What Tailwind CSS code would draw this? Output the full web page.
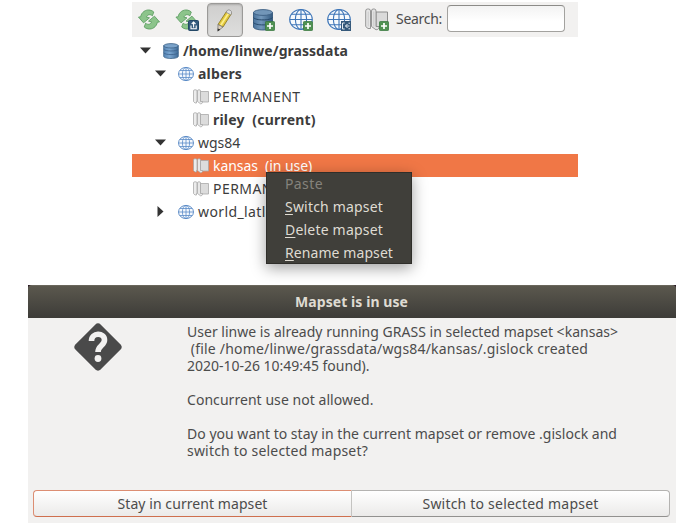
<!DOCTYPE html>
<html lang="en">
<head>
<meta charset="utf-8">
<title>Mapset is in use</title>
<script src="https://cdn.jsdelivr.net/npm/@tailwindcss/browser@4"></script>
</head>
<body class="bg-white w-[698px] h-[528px] overflow-hidden font-['Noto_Sans',sans-serif] text-[14px] text-[#3c3c3c]">
<svg class="absolute w-0 h-0">
  <defs>
    <linearGradient id="gdb" x1="0" x2="1"><stop offset="0" stop-color="#5585b5"/><stop offset=".4" stop-color="#7ba6d0"/><stop offset="1" stop-color="#3f6a96"/></linearGradient>
    <linearGradient id="gdt" x1="0" x2="1"><stop offset="0" stop-color="#4a749d"/><stop offset=".4" stop-color="#7398bb"/><stop offset="1" stop-color="#335a80"/></linearGradient>
    <symbol id="refresh" viewBox="0 0 24 24">
      <g fill="#8cc48b" stroke="#5a9c60" stroke-width=".9" stroke-linejoin="round">
        <path d="M1 9.500l2.300-.3C4 4.500 8.500 1.300 13 2.200c1.700.3 3 1 4 2l-1.500 4C13.500 6.300 10.500 6.500 9.300 9.500l3.200.8L6.300 15.500z"/>
        <path d="M23 14.500l-2.300.3C20 19.500 15.500 22.700 11 21.800c-1.700-.3-3-1-4-2l1.500-4c2 1.900 5 1.700 6.200-1.300l-3.200-.8L17.700 8.500z"/>
      </g>
    </symbol>
    <symbol id="db" viewBox="0 0 16 16">
      <path d="M.7 2.700v10.600C.7 14.600 4 15.500 8 15.500s7.300-.9 7.300-2.200V2.700z" fill="url(#gdb)" stroke="#3d6389" stroke-width=".8"/>
      <path d="M.7 6.200C1.500 7.400 4.500 8 8 8s6.500-.6 7.300-1.800M.7 9.800c.8 1.200 3.800 1.800 7.300 1.800s6.500-.6 7.300-1.800" fill="none" stroke="#3c618a" stroke-width=".8"/>
      <ellipse cx="8" cy="2.800" rx="7.300" ry="2.200" fill="#7ba3ca" stroke="#3d6389" stroke-width=".8"/>
    </symbol>
    <symbol id="dbl" viewBox="0 0 24 24">
      <path d="M1.500 4.500v14.500c0 1.700 4.300 3 9.500 3s9.500-1.300 9.500-3V4.500z" fill="url(#gdt)" stroke="#36587a" stroke-width=".9"/>
      <path d="M1.500 9.500c1 1.600 5 2.400 9.500 2.400s8.500-.8 9.500-2.400M1.500 14.500c1 1.600 5 2.400 9.500 2.400s8.500-.8 9.500-2.400" fill="none" stroke="#284a6b" stroke-width="1"/>
      <ellipse cx="11" cy="4.500" rx="9.500" ry="2.900" fill="#7296b8" stroke="#3c5f82" stroke-width=".9"/>
    </symbol>
    <symbol id="globe" viewBox="0 0 16 16">
      <ellipse cx="8" cy="8" rx="7.500" ry="6.600" fill="#f4f8fd"/>
      <g fill="none" stroke="#5a8cc8" stroke-width=".8"><ellipse cx="8" cy="8" rx="7.500" ry="6.600" stroke="#4178bd"/><ellipse cx="8" cy="8" rx="3.600" ry="6.600"/><path d="M8 1.400v13.200M.5 8h15M1.800 4.500h12.400M1.800 11.500h12.400"/></g>
    </symbol>
    <symbol id="globel" viewBox="0 0 24 24">
      <ellipse cx="12" cy="11.500" rx="11.300" ry="10" fill="#f7fafd"/>
      <g fill="none" stroke="#3f76b8" stroke-width="1.100"><ellipse cx="12" cy="11.500" rx="11.300" ry="10"/><ellipse cx="12" cy="11.500" rx="5.600" ry="10"/><path d="M12 1.500v20M.7 11.500h22.600M2.800 6.200h18.400M2.800 16.800h18.400"/></g>
    </symbol>
    <symbol id="map" viewBox="0 0 16 16">
      <path d="M7.500 2.500h8v10.500h-8z" fill="#dcdcdc" stroke="#a8a8a8" stroke-width=".8"/>
      <path d="M.5 2Q.5.800 1.700.8H2.800Q4 .8 4 2v10.500h-.5v1.500H2L.5 12.500z" fill="#ececec" stroke="#a0a0a0" stroke-width=".7"/>
      <path d="M4.500 2Q4.500.800 5.500.8H6.500Q7.500.8 7.500 2v10.500h2v1Q9 15 7.500 14.800L4.500 12.500z" fill="#e8e8e8" stroke="#a0a0a0" stroke-width=".7"/>
    </symbol>
    <symbol id="mapl" viewBox="0 0 24 24">
      <path d="M11 4h11.500v14.500H11z" fill="#dadada" stroke="#8c8c8c" stroke-width="1"/>
      <path d="M.7 3Q.7 1 2.500 1h1.200Q5.500 1 5.500 3v17.500H3L.7 18.500z" fill="#e6e6e6" stroke="#8c8c8c" stroke-width=".9"/>
      <path d="M6.500 3Q6.500 1 8.200 1h1.100Q11 1 11 3v15.500h3v1.500Q13 22 11 21.800L6.500 18.500z" fill="#e2e2e2" stroke="#8c8c8c" stroke-width=".9"/>
      <path d="M3.200 3.500v15M8.800 3.500v15" stroke="#c4c4c4" stroke-width=".8"/>
    </symbol>
    <symbol id="plus" viewBox="0 0 10 10">
      <rect x=".4" y=".4" width="9.200" height="9.200" rx="1.200" fill="#4f9152" stroke="#35753c" stroke-width=".8"/>
      <path d="M5 2v6M2 5h6" stroke="#fff" stroke-width="1.700"/>
    </symbol>
  </defs>
</svg>

<main class="relative pt-[2px]">
  <section class="ml-[132px] w-[446px] h-[283px]">
    <div class="h-[35px] bg-[#f2f1f0] flex items-center">
      <svg class="w-[24px] h-[23px] ml-[5px] shrink-0"><use href="#refresh"/></svg>
      <svg class="w-[26px] h-[24px] ml-[14px] shrink-0" viewBox="0 0 26 24">
        <use href="#refresh" width="23" height="23"/>
        <rect x="13.500" y="12.500" width="10" height="10" rx="1" fill="#345a7c" stroke="#234766"/>
        <path d="M16 17.500v3.300h5.200v-3.300M18.600 19.500v-5M16.700 16l1.900-1.900 1.900 1.900" fill="none" stroke="#fff" stroke-width="1.100"/>
      </svg>
      <div class="w-[36px] h-[34px] ml-[6px] shrink-0 rounded-[4px] border border-[#9b9a98] bg-gradient-to-b from-[#cfcecd] to-[#dededd] shadow-[inset_0_1px_2px_rgba(0,0,0,0.18)] flex items-center justify-center">
        <svg class="w-[24px] h-[24px]" viewBox="0 0 24 24">
          <path d="M5 16.500L13.800 3l4.700 2.500L10 19z" fill="#e3c83b" stroke="#8d7a26" stroke-width=".9"/>
          <path d="M7 16.800L15.200 4.200l1.500.8-8.200 12.800z" fill="#fbee8d"/>
          <path d="M13.800 3q1-1.900 3.200-.9t1.500 3.400l-.8 1.300-4.700-2.600z" fill="#dedede" stroke="#8a8a8a" stroke-width=".8"/>
          <path d="M5 16.500L10 19l-5.200 4z" fill="#ddd0bb" stroke="#777" stroke-width=".8"/>
          <path d="M4.700 20.400v3l2.700-2z" fill="#333"/>
        </svg>
      </div>
      <svg class="w-[24px] h-[24px] ml-[9px] shrink-0" viewBox="0 0 24 24"><use href="#dbl" width="24" height="24"/><use href="#plus" x="13" y="13" width="10" height="10"/></svg>
      <svg class="w-[25px] h-[24px] ml-[13px] shrink-0" viewBox="0 0 25 24"><use href="#globel" width="24" height="24"/><use href="#plus" x="14" y="13" width="10" height="10"/></svg>
      <svg class="w-[25px] h-[24px] ml-[13px] shrink-0" viewBox="0 0 25 24"><use href="#globel" width="24" height="24"/>
        <rect x="14" y="13" width="10" height="10" fill="#35597a"/>
        <path d="M17.700 15h-2.200v6h2.200M18.500 18h4M20.500 16l-2 2 2 2M21.500 15.200h1.500M21.500 20.800h1.500" fill="none" stroke="#e8eef4" stroke-width="1"/></svg>
      <svg class="w-[25px] h-[24px] ml-[13px] shrink-0" viewBox="0 0 25 24"><use href="#mapl" width="24" height="24"/><use href="#plus" x="14" y="13" width="10" height="10"/></svg>
      <label class="ml-[6px] w-[51px] shrink-0 -mt-[2px] tracking-[-0.3px] text-[#4c4c4c]">Search:</label>
      <div class="w-[118px] h-[27px] shrink-0 -mt-[2px] rounded-[4px] border border-[#a3a29f] border-t-[#8c8b88] bg-gradient-to-b from-[#f3f3f3] to-white to-60%"></div>
    </div>

    <div class="pt-[2px] leading-[23px]">
      <div class="h-[23px] flex items-center pl-[8px] font-bold">
        <svg class="w-[11px] h-[7px]" viewBox="0 0 11 7"><path d="M0 .5h11L5.500 6.500z" fill="#333"/></svg>
        <svg class="w-[16px] h-[16px] ml-[12px] mr-[4px]"><use href="#db"/></svg><span class="tracking-[0.045px]">/home/linwe/grassdata</span>
      </div>
      <div class="h-[23px] flex items-center pl-[23px] font-bold">
        <svg class="w-[11px] h-[7px]" viewBox="0 0 11 7"><path d="M0 .5h11L5.500 6.500z" fill="#333"/></svg>
        <svg class="w-[16px] h-[16px] ml-[12px] mr-[4px]"><use href="#globe"/></svg><span class="tracking-[0.16px]">albers</span>
      </div>
      <div class="h-[23px] flex items-center pl-[61px]">
        <svg class="w-[16px] h-[16px] mr-[4px]"><use href="#map"/></svg><span class="tracking-[0.45px]">PERMANENT</span>
      </div>
      <div class="h-[23px] flex items-center pl-[61px] font-bold">
        <svg class="w-[16px] h-[16px] mr-[4px]"><use href="#map"/></svg><span class="whitespace-pre tracking-[0.2px]">riley  (current)</span>
      </div>
      <div class="h-[23px] flex items-center pl-[23px]">
        <svg class="w-[11px] h-[7px]" viewBox="0 0 11 7"><path d="M0 .5h11L5.500 6.500z" fill="#333"/></svg>
        <svg class="w-[16px] h-[16px] ml-[12px] mr-[4px]"><use href="#globe"/></svg><span>wgs84</span>
      </div>
      <div class="h-[23px] flex items-center pl-[61px] bg-[#f07746] text-white">
        <svg class="w-[16px] h-[16px] mr-[4px]"><use href="#map"/></svg><span class="whitespace-pre tracking-[-0.06px]">kansas  (in use)</span>
      </div>
      <div class="h-[23px] flex items-center pl-[61px]">
        <svg class="w-[16px] h-[16px] mr-[4px]"><use href="#map"/></svg><span class="tracking-[0.45px]">PERMANENT</span>
      </div>
      <div class="h-[23px] flex items-center pl-[25px]">
        <svg class="w-[7px] h-[11px]" viewBox="0 0 7 11"><path d="M.5 0v11L6.500 5.500z" fill="#333"/></svg>
        <svg class="w-[16px] h-[16px] ml-[14px] mr-[4px]"><use href="#globe"/></svg><span class="tracking-[0.4px]">world_latlong</span>
      </div>
    </div>
  </section>

  <div class="absolute left-[266px] top-[172px] w-[146px] h-[92px] bg-[#403f3a] border border-[#2f2e2a] text-[#dfdbd2] leading-[23px] shadow-[0_4px_14px_rgba(0,0,0,0.38)] pl-[18px]">
    <div class="-mt-[1px] h-[23px] tracking-[0.4px] text-[#85837c]">Paste</div>
    <div class="h-[23px] tracking-[0.19px]"><span class="underline underline-offset-2">S</span>witch mapset</div>
    <div class="h-[23px] tracking-[0.2px]"><span class="underline underline-offset-2">D</span>elete mapset</div>
    <div class="h-[23px] tracking-[0.08px]"><span class="underline underline-offset-2">R</span>ename mapset</div>
  </div>

  <section class="ml-[28px] w-[648px] h-[238px] bg-[#f2f1f0] flex flex-col text-[#4c4c4c]">
    <div class="bg-[#2a1a24]">
      <header class="h-[33px] rounded-t-[4px] border-t border-[#6a675c] bg-gradient-to-b from-[#5b584e] to-[#3d3c38] flex items-center justify-center text-[#dfdbd2] font-bold tracking-[0.08px] pr-[1px] pb-[1px]">Mapset is in use</header>
    </div>
    <div class="flex h-[172px] pt-[5px]">
      <svg class="w-[50px] h-[50px] ml-[45px] -mt-[1px] shrink-0" viewBox="0 0 50 50">
        <rect x="7.200" y="7.200" width="35.600" height="35.600" rx="4" transform="rotate(45 25 25)" fill="#4a4a4a"/>
        <path d="M18.500 19C18.500 10.200 31.500 10.200 31.500 18c0 5.500-6.500 5.500-6.500 12" fill="none" stroke="#f2f1f0" stroke-width="5.600"/>
        <circle cx="25" cy="36.500" r="3.400" fill="#f2f1f0"/>
      </svg>
      <div class="ml-[64px] leading-[17px]">
        <p class="whitespace-pre tracking-[0.018px]">User linwe is already running GRASS in selected mapset &lt;kansas&gt;</p>
        <p class="whitespace-pre tracking-[0.19px]"> (file /home/linwe/grassdata/wgs84/kansas/.gislock created</p>
        <p class="whitespace-pre tracking-[-0.02px]">2020-10-26 10:49:45 found).</p>
        <p class="mt-[17px] tracking-[0.05px]">Concurrent use not allowed.</p>
        <p class="mt-[17px] whitespace-pre tracking-[0.018px]">Do you want to stay in the current mapset or remove .gislock and</p>
        <p class="tracking-[0.197px]">switch to selected mapset?</p>
      </div>
    </div>
    <div class="flex h-[27px] mx-[5px]">
      <button class="w-[319px] rounded-l-[4px] border border-[#dc8e73] border-b-[#cf6f4e] border-r-[#c4c3c1] bg-gradient-to-b from-white to-[#ebeae9] tracking-[0.073px]">Stay in current mapset</button>
      <button class="w-[318px] rounded-r-[4px] border border-l-0 border-[#b4b3b1] border-b-[#92918f] bg-gradient-to-b from-white to-[#ebeae9] tracking-[0.209px]">Switch to selected mapset</button>
    </div>
  </section>
</main>
</body>
</html>
